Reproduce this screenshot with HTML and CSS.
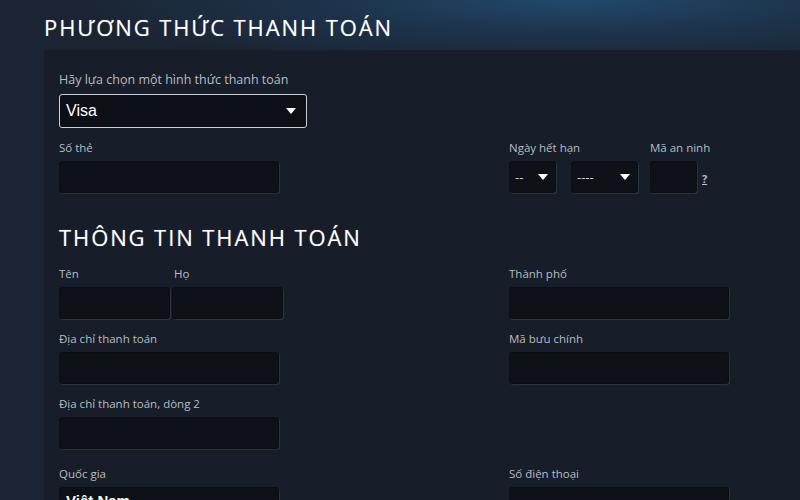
FILE: index.html
```html
<!DOCTYPE html>
<html lang="vi">
<head>
  <meta charset="UTF-8">
  <title>Thanh toán</title>
  <link rel="stylesheet" href="styles.css">
</head>
<body>
  <div class="page">
    <h1 class="page-title">Phương thức thanh toán</h1>

    <div class="panel">
      <div class="field">
        <label class="label label-big">Hãy lựa chọn một hình thức thanh toán</label>
        <div class="select select-method">
          <span>Visa</span>
          <svg class="caret" width="10" height="6" viewBox="0 0 10 6"><path d="M0 0h10L5 6z" fill="#fff"/></svg>
        </div>
      </div>

      <div class="card-row">
        <div class="field col-left">
          <label class="label">Số thẻ</label>
          <div class="input"></div>
        </div>
        <div class="card-extra">
          <div class="field">
            <label class="label">Ngày hết hạn</label>
            <div class="expiry">
              <div class="select select-small select-month">
                <span>--</span>
                <svg class="caret" width="10" height="6" viewBox="0 0 10 6"><path d="M0 0h10L5 6z" fill="#fff"/></svg>
              </div>
              <div class="select select-small select-year">
                <span>----</span>
                <svg class="caret" width="10" height="6" viewBox="0 0 10 6"><path d="M0 0h10L5 6z" fill="#fff"/></svg>
              </div>
            </div>
          </div>
          <div class="field">
            <label class="label">Mã an ninh</label>
            <div class="cvv">
              <div class="input input-cvv"></div>
              <a class="help" href="#">?</a>
            </div>
          </div>
        </div>
      </div>

      <h2 class="section-title">Thông tin thanh toán</h2>

      <div class="billing">
        <div class="name-row">
          <div class="field">
            <label class="label">Tên</label>
            <div class="input input-name"></div>
          </div>
          <div class="field">
            <label class="label label-shift">Họ</label>
            <div class="input input-name"></div>
          </div>
        </div>
        <div class="field">
          <label class="label">Thành phố</label>
          <div class="input"></div>
        </div>

        <div class="field">
          <label class="label">Địa chỉ thanh toán</label>
          <div class="input"></div>
        </div>
        <div class="field">
          <label class="label">Mã bưu chính</label>
          <div class="input"></div>
        </div>

        <div class="field">
          <label class="label">Địa chỉ thanh toán, dòng 2</label>
          <div class="input"></div>
        </div>
        <div></div>

        <div class="field field-gap">
          <label class="label">Quốc gia</label>
          <div class="input select-country"><span>Việt Nam</span></div>
        </div>
        <div class="field field-gap">
          <label class="label">Số điện thoại</label>
          <div class="input"></div>
        </div>
      </div>
    </div>
  </div>
</body>
</html>
```

FILE: styles.css
```css
body {
  margin: 0;
  background-color: #1b2432;
  background-image: radial-gradient(ellipse 520px 70px at 72% 0, #21496c 0%, rgba(31, 68, 102, 0.5) 45%, rgba(27, 36, 50, 0) 100%);
  background-repeat: no-repeat;
  color: #b6bdc4;
  font-family: "Open Sans", Arial, sans-serif;
  height: 500px;
  overflow: hidden;
}

.page {
  padding-left: 44px;
}

.page-title,
.section-title {
  margin: 0;
  font-weight: 400;
  text-transform: uppercase;
  color: #ffffff;
  letter-spacing: 1.9px;
  text-shadow: 0 0 1px rgba(255, 255, 255, 0.4);
}

.page-title {
  font-size: 22px;
  height: 50px;
  line-height: 54px;
}

.panel {
  background-color: #171e29;
  padding: 21px 15px 0 15px;
  min-height: 450px;
}

.section-title {
  font-size: 22px;
  line-height: 30px;
  margin: 29px 0 14px 0;
}

.field {
  display: flex;
  flex-direction: column;
}

.label {
  font-size: 11.5px;
  line-height: 16px;
  margin-bottom: 5px;
  color: #b6bdc4;
}

.label-big {
  font-size: 12.5px;
  line-height: 18px;
  margin-bottom: 5px;
}

.label-shift {
  padding-left: 2px;
}

.select,
.input {
  box-sizing: border-box;
  height: 32px;
  background-color: #0e1218;
  border: 1px solid #0a0d12;
  border-radius: 3px;
  box-shadow: 1px 1px 0 #2a3340;
}

.select {
  display: flex;
  align-items: center;
  justify-content: space-between;
  padding: 0 10px 0 6px;
  color: #ffffff;
}

.select-method {
  width: 248px;
  height: 34px;
  border: 1px solid #c9d0d6;
  box-shadow: none;
  background-color: #0c0f15;
  font-family: "Liberation Sans", Arial, sans-serif;
  font-size: 16px;
  margin-bottom: 12px;
}

.caret {
  display: block;
}

.input {
  width: 220px;
}

.card-row {
  display: flex;
  gap: 230px;
}

.card-extra {
  display: flex;
  gap: 12px;
}

.expiry {
  display: flex;
  gap: 15px;
}

.select-small {
  font-size: 13px;
  color: #c6cdd3;
  padding: 0 7px 0 5px;
}

.select-month {
  width: 47px;
}

.select-year {
  width: 67px;
}

.cvv {
  display: flex;
  align-items: flex-end;
  gap: 5px;
}

.input-cvv {
  width: 47px;
}

.help {
  color: #b6bdc4;
  font-size: 11px;
  font-weight: 700;
  line-height: 14px;
  margin-bottom: 7px;
}

.billing {
  display: grid;
  grid-template-columns: 224px 220px;
  column-gap: 226px;
  row-gap: 12px;
}

.name-row {
  display: flex;
  gap: 2px;
}

.input-name {
  width: 111px;
}

.field-gap {
  margin-top: 5px;
}

.select-country {
  color: #ffffff;
  font-family: "Liberation Sans", Arial, sans-serif;
  font-weight: 700;
  font-size: 15px;
  padding: 4px 6px;
}
```
